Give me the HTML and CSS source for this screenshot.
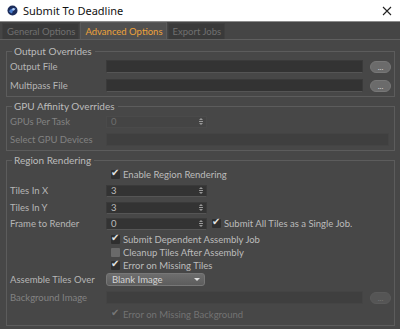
FILE: index.html
```html
<!DOCTYPE html>
<html lang="en">
<head>
  <meta charset="UTF-8">
  <title>Submit To Deadline</title>
  <link rel="stylesheet" href="styles.css">
</head>
<body>
  <div class="window">
    <div class="titlebar">
      <svg class="app-icon" width="11" height="11" viewBox="0 0 11 11">
        <circle cx="5.5" cy="5.5" r="5" fill="#1c2c5a"/>
        <path d="M2 6.5 Q4 2.5 9 3.5 Q6 5 5 8.5 Q3.5 8 2 6.5Z" fill="#4a7fd0"/>
        <circle cx="6.5" cy="4.2" r="1.2" fill="#b9d2f5"/>
      </svg>
      <span class="title">Submit To Deadline</span>
      <svg class="close" width="10" height="10" viewBox="0 0 10 10">
        <path d="M1 1 L9 9 M9 1 L1 9" stroke="#222" stroke-width="1.1"/>
      </svg>
    </div>

    <div class="tabs">
      <div class="tab">General Options</div>
      <div class="tab active">Advanced Options</div>
      <div class="tab">Export Jobs</div>
    </div>

    <div class="panel">
      <fieldset class="group">
        <legend>Output Overrides</legend>
        <div class="row gap3">
          <label>Output File</label>
          <div class="input"></div>
          <button class="browse">...</button>
        </div>
        <div class="row gap6">
          <label>Multipass File</label>
          <div class="input"></div>
          <button class="browse">...</button>
        </div>
      </fieldset>

      <fieldset class="group">
        <legend>GPU Affinity Overrides</legend>
        <div class="row gap3">
          <label class="dim">GPUs Per Task</label>
          <div class="spin disabled"><span>0</span><i class="arrows"></i></div>
        </div>
        <div class="row gap5">
          <label class="dim">Select GPU Devices</label>
          <div class="input disabled wide"></div>
        </div>
      </fieldset>

      <fieldset class="group">
        <legend>Region Rendering</legend>
        <div class="row check-row first">
          <label></label>
          <div class="check"><span class="box on"></span>Enable Region Rendering</div>
        </div>
        <div class="row gap3">
          <label>Tiles In X</label>
          <div class="spin"><span>3</span><i class="arrows"></i></div>
        </div>
        <div class="row gap4">
          <label>Tiles In Y</label>
          <div class="spin"><span>3</span><i class="arrows"></i></div>
        </div>
        <div class="row gap3">
          <label>Frame to Render</label>
          <div class="spin"><span>0</span><i class="arrows"></i></div>
          <div class="check side"><span class="box on"></span>Submit All Tiles as a Single Job.</div>
        </div>
        <div class="row check-row gap3">
          <label></label>
          <div class="check"><span class="box on"></span>Submit Dependent Assembly Job</div>
        </div>
        <div class="row check-row">
          <label></label>
          <div class="check"><span class="box"></span>Cleanup Tiles After Assembly</div>
        </div>
        <div class="row check-row">
          <label></label>
          <div class="check"><span class="box on"></span>Error on Missing Tiles</div>
        </div>
        <div class="row gap1">
          <label>Assemble Tiles Over</label>
          <div class="select">Blank Image<i class="caret"></i></div>
        </div>
        <div class="row gap5">
          <label class="dim">Background Image</label>
          <div class="input disabled"></div>
          <button class="browse disabled">...</button>
        </div>
        <div class="row check-row gap4">
          <label></label>
          <div class="check dim"><span class="box on faded"></span>Error on Missing Background</div>
        </div>
      </fieldset>
    </div>
  </div>
</body>
</html>
```

FILE: styles.css
```css
* {
  margin: 0;
  padding: 0;
  box-sizing: border-box;
}

body {
  width: 400px;
  height: 329px;
  overflow: hidden;
  background: #474747;
  font-family: "Lato", "DejaVu Sans", sans-serif;
  font-size: 9.5px;
  color: #b6b6b6;
}

.window {
  display: flex;
  flex-direction: column;
  height: 100%;
}

.titlebar {
  height: 24px;
  background: #fff;
  border-bottom: 1px solid #8c8c8c;
  display: flex;
  align-items: center;
  padding: 0 4px 0 7px;
}

.app-icon {
  margin-right: 5px;
}

.title {
  font-family: "Noto Sans", "Open Sans", sans-serif;
  font-size: 11px;
  color: #111;
  flex: 1;
}

.close {
  margin-right: 4px;
}

.tabs {
  height: 19px;
  display: flex;
  align-items: flex-end;
  padding-left: 2px;
  background: #454545;
  border-bottom: 1px solid #5f5f5f;
}

.tab {
  height: 16px;
  line-height: 16px;
  padding: 0 3px 0 4px;
  background: #3a3a3a;
  color: #707070;
  border: 1px solid #3f3f3f;
  border-bottom: 0;
  margin-right: 1px;
  font-size: 9.5px;
}

.tab.active {
  height: 17px;
  line-height: 17px;
  background: #505050;
  color: #eda23a;
  border-color: #5a5a5a;
}

.panel {
  flex: 1;
  padding: 5px 5px 0 6px;
}

.group {
  border: 1px solid #5c5c5c;
  padding: 0 3px 4px 3px;
  margin-bottom: 3px;
}

.group legend {
  padding: 0 3px 0 2px;
  margin-left: 2px;
  line-height: 12px;
  font-size: 10px;
  color: #bcbcbc;
}

.row {
  display: flex;
  align-items: center;
  height: 13px;
  margin-top: 2px;
}

.row.gap1 { margin-top: 1px; }
.row.gap3 { margin-top: 3px; }
.row.gap4 { margin-top: 4px; }
.row.gap5 { margin-top: 5px; }
.row.gap6 { margin-top: 6px; }
.check-row { margin-top: 0; }
.check-row.first { margin-top: 2px; }

.row label {
  width: 96px;
  flex: none;
}

.dim {
  color: #828282;
}

.input {
  width: 257px;
  height: 13px;
  background: #333;
  border: 1px solid #3a3a3a;
  border-bottom-color: #555;
}

.input.wide {
  width: 283px;
}

.input.disabled {
  background: #3f3f3f;
  border-color: #444;
}

.browse {
  width: 21px;
  height: 12px;
  margin-left: 7px;
  border: 1px solid #777;
  border-radius: 6px;
  background: #6b6b6b;
  color: #d8d8d8;
  font-family: inherit;
  font-size: 8px;
  line-height: 8px;
}

.browse.disabled {
  background: #555;
  border-color: #5a5a5a;
  color: #777;
}

.spin {
  width: 101px;
  height: 12px;
  background: #333;
  border: 1px solid #3a3a3a;
  border-bottom-color: #555;
  display: flex;
  align-items: center;
  justify-content: space-between;
  padding: 0 3px 0 4px;
  color: #bcbcbc;
}

.spin.disabled {
  background: #444;
  border-color: #4a4a4a;
  color: #6e6e6e;
}

.arrows {
  width: 4px;
  height: 7px;
  background:
    linear-gradient(#999, #999) center 3px / 4px 1px no-repeat;
  position: relative;
}

.arrows::before,
.arrows::after {
  content: '';
  position: absolute;
  left: 0;
  border-left: 2px solid transparent;
  border-right: 2px solid transparent;
}

.arrows::before {
  top: 0;
  border-bottom: 2px solid #999;
}

.arrows::after {
  bottom: 0;
  border-top: 2px solid #999;
}

.check {
  display: flex;
  align-items: center;
  color: #bcbcbc;
  white-space: nowrap;
}

.check.dim {
  color: #737373;
}

.check.side {
  margin-left: 5px;
}

.box {
  width: 9px;
  height: 9px;
  margin: 0 3px 0 5px;
  background: #2f2f2f;
  border-radius: 1px;
  position: relative;
}

.check.side .box {
  margin-left: 0;
}

.box.on::after {
  content: '\2714';
  position: absolute;
  left: 0;
  top: -3px;
  font-size: 10px;
  color: #e2e2e2;
  font-family: "DejaVu Sans", sans-serif;
}

.box.faded {
  background: #444;
}

.box.faded::after {
  color: #777;
}

.box:not(.on) {
  background: #6a6a6a;
}

.select {
  width: 99px;
  height: 13px;
  border-radius: 3px;
  background: linear-gradient(#6d6d6d, #5d5d5d);
  border: 1px solid #777;
  color: #d4d4d4;
  line-height: 11px;
  padding: 0 5px;
  position: relative;
}

.caret {
  position: absolute;
  right: 4px;
  top: 4px;
  border-left: 3px solid transparent;
  border-right: 3px solid transparent;
  border-top: 3px solid #e0e0e0;
}
```
